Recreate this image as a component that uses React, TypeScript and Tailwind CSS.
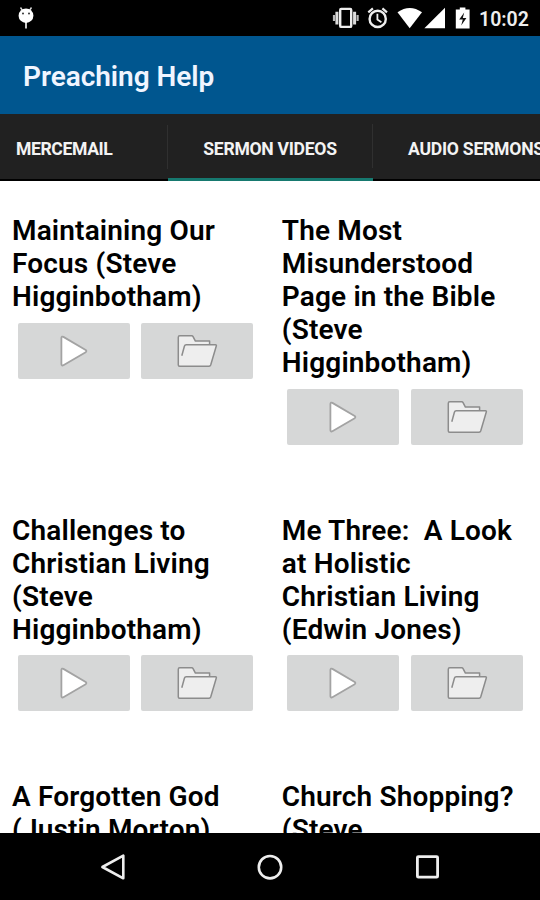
type Sermon = {
  title: string;
};

const SERMONS: Sermon[] = [
  { title: 'Maintaining Our Focus (Steve Higginbotham)' },
  { title: 'The Most Misunderstood Page in the Bible (Steve Higginbotham)' },
  { title: 'Challenges to Christian Living (Steve Higginbotham)' },
  { title: 'Me Three:  A Look at Holistic Christian Living (Edwin Jones)' },
  { title: 'A Forgotten God (Justin Morton)' },
  { title: 'Church Shopping? (Steve Higginbotham)' },
];

function DebugIcon() {
  return (
    <svg width="18" height="24" viewBox="0 0 18 24" className="block">
      <path d="M3.5 1.5l2 3M14.5 1.5l-2 3" stroke="#ddd" strokeWidth="1.4" />
      <ellipse cx="9" cy="9.7" rx="7.4" ry="7.2" fill="#fff" />
      <circle cx="6" cy="7.5" r="1" fill="#333" />
      <circle cx="12" cy="7.5" r="1" fill="#333" />
      <path d="M9 16v6.5" stroke="#fff" strokeWidth="1.6" />
    </svg>
  );
}

function StatusIcons() {
  return (
    <svg width="140" height="24" viewBox="332 6 140 24" className="block">
      {/* vibrate */}
      <rect x="340.2" y="8.9" width="11" height="18" rx="1" fill="none" stroke="#eee" strokeWidth="2.4" />
      <path d="M336.9 11.8v12.6M354.6 11.8v12.6" stroke="#ddd" strokeWidth="3" />
      <path d="M334 15v6M357.6 15v6" stroke="#bbb" strokeWidth="2.2" />
      {/* alarm */}
      <circle cx="377.7" cy="18.9" r="8.1" fill="none" stroke="#eee" strokeWidth="2.4" />
      <path d="M377.4 13.8v5.8l4 2.6" fill="none" stroke="#eee" strokeWidth="1.8" />
      <path d="M368.3 12.3l4.6-3.9M387 12.3l-4.6-3.9" stroke="#eee" strokeWidth="2.2" />
      {/* wifi */}
      <path d="M397.5 12.3Q409.7 3.6 422 12.3L409.7 28.2z" fill="#fff" />
      {/* signal */}
      <path d="M445 7.7v20.6h-20.6z" fill="#fff" />
      {/* battery */}
      <path d="M459.8 7.6h5.6v2h4.2v18.8h-13.8V9.6h4z" fill="#fff" />
      <path d="M464.2 12.5l-5 7h3.6l-1.6 6 5.2-7.4h-3.6z" fill="#111" />
    </svg>
  );
}

function PlayIcon() {
  return (
    <svg width="40" height="40" viewBox="0 0 40 40">
      <path d="M7.4 6.8v26.4q.3 1.9 2 1L31.7 21.2q1.3-1.2 0-2.2L9.4 5.9q-1.7-.9-2 .9z" fill="#fff" stroke="#a3a3a3" strokeWidth="1.8" strokeLinejoin="round" />
    </svg>
  );
}

function FolderIcon() {
  return (
    <svg width="42" height="36" viewBox="0 0 42 36" fill="#eee" stroke="#8c8c8c" strokeWidth="1.5" strokeLinejoin="round">
      <path d="M2.3 32V4.2q0-1.4 1.4-1.4h12q1 0 1.5 1l2.2 4.3h14.2v3.6l-1 21.5H3.5q-1.2 0-1.2-1.2z" />
      <path d="M5.8 22.7l2.6-9.4q.4-1.5 1.8-1.5h29.3q1.2 0 .8 1.2l-5.6 19q-.4 1.2-1.7 1.2H3.8" />
    </svg>
  );
}

function SermonCard({ title }: Sermon) {
  return (
    <div className="pb-[69px] pl-3">
      <h2 className="w-[240px] whitespace-pre-wrap text-[28px] leading-[33px] font-semibold tracking-[0.16px] text-black">{title}</h2>
      <div className="mt-[9.5px] ml-[5.6px] flex gap-[11.8px]">
        <button className="flex h-14 w-28 items-center justify-center rounded-xs bg-[#d6d7d7]">
          <PlayIcon />
        </button>
        <button className="flex h-14 w-28 items-center justify-center rounded-xs bg-[#d6d7d7]">
          <FolderIcon />
        </button>
      </div>
    </div>
  );
}

function App() {
  return (
    <div className="flex h-[900px] w-[540px] flex-col overflow-hidden bg-white font-['Roboto',sans-serif]">
      {/* Status bar */}
      <div className="flex h-9 shrink-0 items-center bg-black pl-[17px]">
        <DebugIcon />
        <div className="ml-[297px]">
          <StatusIcons />
        </div>
        <span className="ml-[7px] pt-[3px] text-[19.5px] leading-8 font-semibold text-[#eee]">10:02</span>
      </div>

      {/* App bar */}
      <header className="flex h-[78px] shrink-0 items-center bg-[#00568f] pl-[23px]">
        <h1 className="pt-1 text-[28px] leading-8 font-semibold tracking-[-0.05px] text-[#f0f5ff]">Preaching Help</h1>
      </header>

      {/* Tabs */}
      <nav className="flex h-[67px] shrink-0 bg-[#212121] text-[17.6px] font-bold tracking-[-0.4px] whitespace-nowrap text-[#f3f3f3]">
        <div className="flex w-[168px] shrink-0 items-center border-b-2 border-black pl-4">
          <span className="grow pt-[5px]">MERCEMAIL</span>
          <span className="h-[44px] w-px bg-[#303030]" />
        </div>
        <div className="flex w-[205px] shrink-0 items-center border-b-3 border-[#16796f]">
          <span className="grow pt-1.5 text-center tracking-[-0.3px]">SERMON VIDEOS</span>
          <span className="h-[44px] w-px bg-[#303030]" />
        </div>
        <div className="flex w-[167px] shrink-0 items-center overflow-hidden border-b-2 border-black pl-[35px]">
          <span className="pt-[5px] tracking-[-0.25px]">AUDIO SERMONS</span>
        </div>
      </nav>

      {/* Sermon grid */}
      <main className="grid min-h-0 flex-1 grid-cols-[269.8px_270.2px] content-start overflow-hidden pt-[33px]">
        {SERMONS.map((sermon) => (
          <SermonCard key={sermon.title} title={sermon.title} />
        ))}
      </main>

      {/* Navigation bar */}
      <footer className="flex h-[67px] shrink-0 items-center justify-between bg-black px-[99px]">
        <svg width="28" height="28" viewBox="0 0 28 28" fill="none" stroke="#eee" strokeWidth="2.6" strokeLinejoin="round">
          <path d="M24.3 2.7v22.6L3.4 14z" />
        </svg>
        <svg width="28" height="28" viewBox="0 0 28 28" fill="none" stroke="#eee" strokeWidth="2.6">
          <circle cx="14" cy="14.2" r="11.2" />
        </svg>
        <svg width="28" height="28" viewBox="0 0 28 28" fill="none" stroke="#eee" strokeWidth="2.8">
          <rect x="4.4" y="3.6" width="20.2" height="20.6" rx="1" />
        </svg>
      </footer>
    </div>
  );
}

export default App;
